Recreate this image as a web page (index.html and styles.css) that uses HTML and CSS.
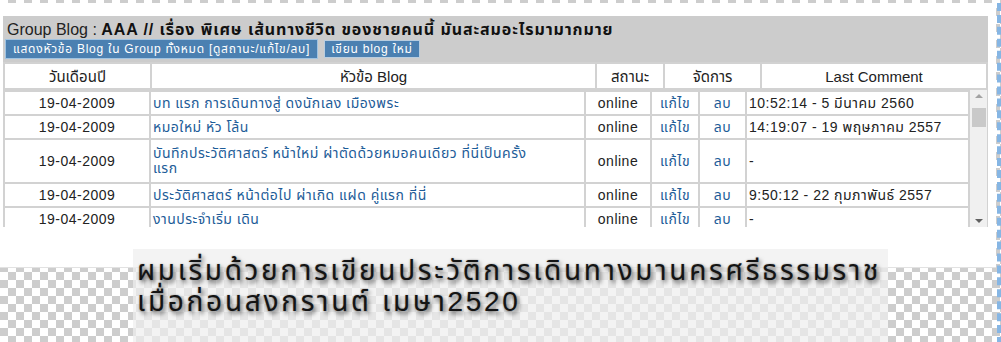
FILE: index.html
```html
<!DOCTYPE html>
<html lang="th">

<head>
    <meta charset="UTF-8">
    <meta name="viewport" content="width=device-width, initial-scale=1.0">
    <title>Group Blog</title>
    <link rel="stylesheet" href="styles.css">
</head>

<body>
    <div class="frame">
        <div class="sheet">
            <div class="panel">
                <div class="panel-head">
                    <h1 class="title">Group Blog : <b>AAA // เรื่อง พิเศษ เส้นทางชีวิต ของชายคนนี้ มันสะสมอะไรมามากมาย</b></h1>
                    <div class="btns">
                        <a href="#" class="btn">แสดงหัวข้อ Blog ใน Group ทั้งหมด [ดูสถานะ/แก้ไข/ลบ]</a>
                        <a href="#" class="btn btn-small">เขียน blog ใหม่</a>
                    </div>
                </div>

                <table class="grid grid-head">
                    <tr>
                        <th class="c-date">วันเดือนปี</th>
                        <th class="c-topic">หัวข้อ Blog</th>
                        <th class="c-status">สถานะ</th>
                        <th class="c-manage">จัดการ</th>
                        <th class="c-last">Last Comment</th>
                    </tr>
                </table>

                <div class="scroll">
                    <table class="grid grid-body">
                        <tr>
                            <td class="d-date">19-04-2009</td>
                            <td class="d-topic"><a href="#">บท แรก การเดินทางสู่ ดงนักเลง เมืองพระ</a></td>
                            <td class="d-status">online</td>
                            <td class="d-edit"><a href="#">แก้ไข</a></td>
                            <td class="d-del"><a href="#">ลบ</a></td>
                            <td class="d-last">10:52:14 - 5 มีนาคม 2560</td>
                        </tr>
                        <tr>
                            <td class="d-date">19-04-2009</td>
                            <td class="d-topic"><a href="#">หมอใหม่ หัว โล้น</a></td>
                            <td class="d-status">online</td>
                            <td class="d-edit"><a href="#">แก้ไข</a></td>
                            <td class="d-del"><a href="#">ลบ</a></td>
                            <td class="d-last">14:19:07 - 19 พฤษภาคม 2557</td>
                        </tr>
                        <tr class="tall">
                            <td class="d-date">19-04-2009</td>
                            <td class="d-topic"><a href="#">บันทึกประวัติศาสตร์ หน้าใหม่ ผ่าตัดด้วยหมอคนเดียว ที่นี่เป็นครั้ง<br>แรก</a></td>
                            <td class="d-status">online</td>
                            <td class="d-edit"><a href="#">แก้ไข</a></td>
                            <td class="d-del"><a href="#">ลบ</a></td>
                            <td class="d-last">-</td>
                        </tr>
                        <tr>
                            <td class="d-date">19-04-2009</td>
                            <td class="d-topic"><a href="#">ประวัติศาสตร์ หน้าต่อไป ผ่าเกิด แฝด คู่แรก ที่นี่</a></td>
                            <td class="d-status">online</td>
                            <td class="d-edit"><a href="#">แก้ไข</a></td>
                            <td class="d-del"><a href="#">ลบ</a></td>
                            <td class="d-last">9:50:12 - 22 กุมภาพันธ์ 2557</td>
                        </tr>
                        <tr>
                            <td class="d-date">19-04-2009</td>
                            <td class="d-topic"><a href="#">งานประจำเริ่ม เดิน</a></td>
                            <td class="d-status">online</td>
                            <td class="d-edit"><a href="#">แก้ไข</a></td>
                            <td class="d-del"><a href="#">ลบ</a></td>
                            <td class="d-last">-</td>
                        </tr>
                    </table>
                    <!-- scrollbar ทำเองให้เหมือนของ windows -->
                    <div class="sbar">
                        <span class="arr arr-up"></span>
                        <span class="thumb"></span>
                        <span class="arr arr-down"></span>
                    </div>
                </div>
            </div>
        </div>

        <div class="caption">
            ผมเริ่มด้วยการเขียนประวัติการเดินทางมานครศรีธรรมราช<br>
            เมื่อก่อนสงกรานต์ เมษา2520
        </div>
    </div>
</body>

</html>
```

FILE: styles.css
```css
* {
    margin: 0;
    padding: 0;
    box-sizing: border-box;
}

html,
body {
    height: 342px;
    overflow: hidden;
}

body {
    font-family: "Liberation Sans", "Noto Sans Thai", "Noto Sans", "DejaVu Sans", sans-serif;
    font-size: 14px;
    color: #222;
    /* พื้นหลังลายตารางหมากรุก */
    background: repeating-conic-gradient(#cdcdcd 0 25%, #fff 0 50%) 0 0 / 16px 16px;
}

.frame {
    position: relative;
    width: 1001px;
    height: 342px;
    border-right: 4px dashed #86b6e4;
}

.sheet {
    background: #fff;
    margin-top: 3px;
    width: 996px;
    height: 265px;
    padding: 13px 0 0 3px;
    border-bottom: 1px solid #e2e2e2;
}

.panel {
    width: 985px;
}

.panel-head {
    background: #cccccc;
    height: 46px;
    padding: 4px 2px 0 2px;
}

.title {
    font-size: 16px;
    font-weight: normal;
    color: #222;
    line-height: 19px;
    padding-left: 2px;
}

.title b {
    color: #111;
    letter-spacing: 0.9px;
}

.btns {
    display: flex;
    gap: 6px;
    margin-top: 0;
    align-items: center;
}

.btn {
    display: inline-block;
    background: #4b80b1;
    color: #fff;
    text-decoration: none;
    font-size: 12px;
    letter-spacing: 0.75px;
    line-height: 16px;
    padding: 1px 7px;
    border: 1px solid #9fc3e2;
}

.btn-small {
    padding: 0 6px;
    border-color: #b9cddf;
}

.grid {
    border-collapse: separate;
    border-spacing: 2px;
    background: #d2d2d2;
    width: 985px;
    table-layout: fixed;
}

.grid th,
.grid td {
    background: #fff;
    font-weight: normal;
    line-height: 15px;
}

.grid th {
    height: 24px;
    font-size: 15px;
    color: #222;
}

.c-date { width: 145px; }
.c-topic { width: 443px; }
.c-status { width: 66px; }
.c-manage { width: 95px; }

.scroll {
    display: flex;
    height: 137px;
    overflow: hidden;
    background: #d2d2d2;
    padding-right: 1px;
}

.grid-body {
    width: 967px;
    flex: none;
    align-self: flex-start;
}

.grid-body td {
    height: 22px;
    padding: 0 2px;
    letter-spacing: 0.5px;
    white-space: nowrap;
}

.grid-body .tall td {
    height: 42px;
}

.grid-body a {
    color: #1d5c98;
    text-decoration: none;
}

.d-date {
    width: 144px;
    text-align: center;
}

.d-topic { width: 433px; }

.d-status {
    width: 64px;
    text-align: center;
}

.d-edit {
    width: 46px;
    text-align: center;
}

.d-del {
    width: 45px;
    text-align: center;
}

.sbar {
    flex: none;
    width: 17px;
    background: #f0f0f0;
    display: flex;
    flex-direction: column;
    align-items: center;
    padding: 4px 0;
}

.arr {
    width: 0;
    height: 0;
    border-left: 4px solid transparent;
    border-right: 4px solid transparent;
}

.arr-up {
    border-bottom: 4px solid #a3a3a3;
}

.arr-down {
    border-top: 4px solid #606060;
    margin-top: auto;
}

.thumb {
    width: 14px;
    height: 19px;
    background: #c9c9c9;
    margin-top: 10px;
}

/* ข้อความตัวใหญ่ที่ทับอยู่ด้านล่าง */
.caption {
    position: absolute;
    left: 133px;
    top: 246px;
    width: 755px;
    height: 96px;
    padding: 6px 0 0 4px;
    background: rgba(238, 238, 238, 0.72);
    font-size: 28px;
    letter-spacing: 2.7px;
    line-height: 31px;
    color: #141414;
    text-shadow: 2px 3px 4px rgba(0, 0, 0, 0.6), 0 0 2px rgba(0, 0, 0, 0.3);
    white-space: nowrap;
}
```
